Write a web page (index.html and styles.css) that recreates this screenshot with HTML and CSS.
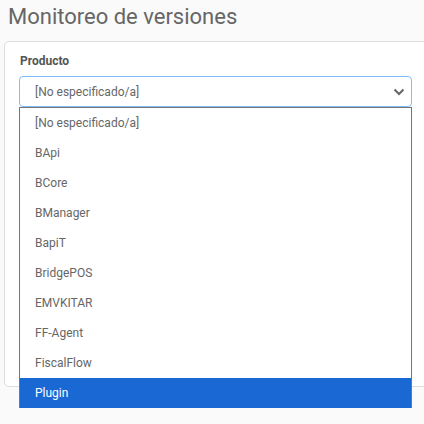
FILE: index.html
```html
<!DOCTYPE html>
<html lang="es">
<head>
<meta charset="utf-8">
<title>Monitoreo de versiones</title>
<link rel="stylesheet" href="styles.css">
</head>
<body>
<h1 class="title">Monitoreo de versiones</h1>
<div class="card">
  <div class="field">
    <label class="label">Producto</label>
    <div class="select-wrap">
      <div class="select">
        <span class="select-text">[No especificado/a]</span>
        <svg class="chevron" width="12" height="8" viewBox="0 0 12 8"><path d="M1.5 1.5 L6 6 L10.5 1.5" fill="none" stroke="#666" stroke-width="2"/></svg>
      </div>
      <ul class="menu">
        <li class="option">[No especificado/a]</li>
        <li class="option">BApi</li>
        <li class="option">BCore</li>
        <li class="option">BManager</li>
        <li class="option">BapiT</li>
        <li class="option">BridgePOS</li>
        <li class="option">EMVKITAR</li>
        <li class="option">FF-Agent</li>
        <li class="option">FiscalFlow</li>
        <li class="option selected">Plugin</li>
      </ul>
    </div>
  </div>
</div>
</body>
</html>
```
FILE: styles.css
```css
html {
  overflow: hidden;
  background: #fafafa;
}
body {
  margin: 0;
  padding: 0;
  min-height: 424px;
  background: #fafafa;
  font-family: Roboto, "Liberation Sans", sans-serif;
}
.title {
  margin: 0;
  padding: 2px 8px 0;
  height: 36px;
  font-size: 22px;
  font-weight: 400;
  line-height: 30px;
  color: #666;
}
.card {
  margin-left: 4px;
  margin-top: 3px;
  width: 440px;
  height: 346px;
  box-sizing: border-box;
  background: #fff;
  border: 1px solid #ddd;
  border-radius: 5px;
  padding: 12px 14px;
}
.field {
  width: 393px;
}
.label {
  display: block;
  font-size: 12px;
  font-weight: 700;
  color: #555;
  line-height: 14px;
  margin-bottom: 8px;
  padding-left: 1px;
}
.select-wrap {
  position: relative;
}
.select {
  height: 31px;
  box-sizing: border-box;
  border: 1px solid #80bdff;
  border-radius: 4px;
  display: flex;
  align-items: center;
  justify-content: space-between;
  padding: 0 6px 0 15px;
  font-size: 12px;
  color: #666;
}
.chevron {
  display: block;
}
.menu {
  position: absolute;
  left: 0;
  top: 31px;
  width: 393px;
  box-sizing: border-box;
  margin: 0;
  padding: 0;
  list-style: none;
  background: #fff;
  border: 1px solid #767676;
  border-bottom: none;
}
.option {
  height: 30px;
  line-height: 30px;
  padding-left: 15px;
  font-size: 12px;
  color: #666;
}
.option.selected {
  background: #1a68d4;
  color: #fff;
}
```
